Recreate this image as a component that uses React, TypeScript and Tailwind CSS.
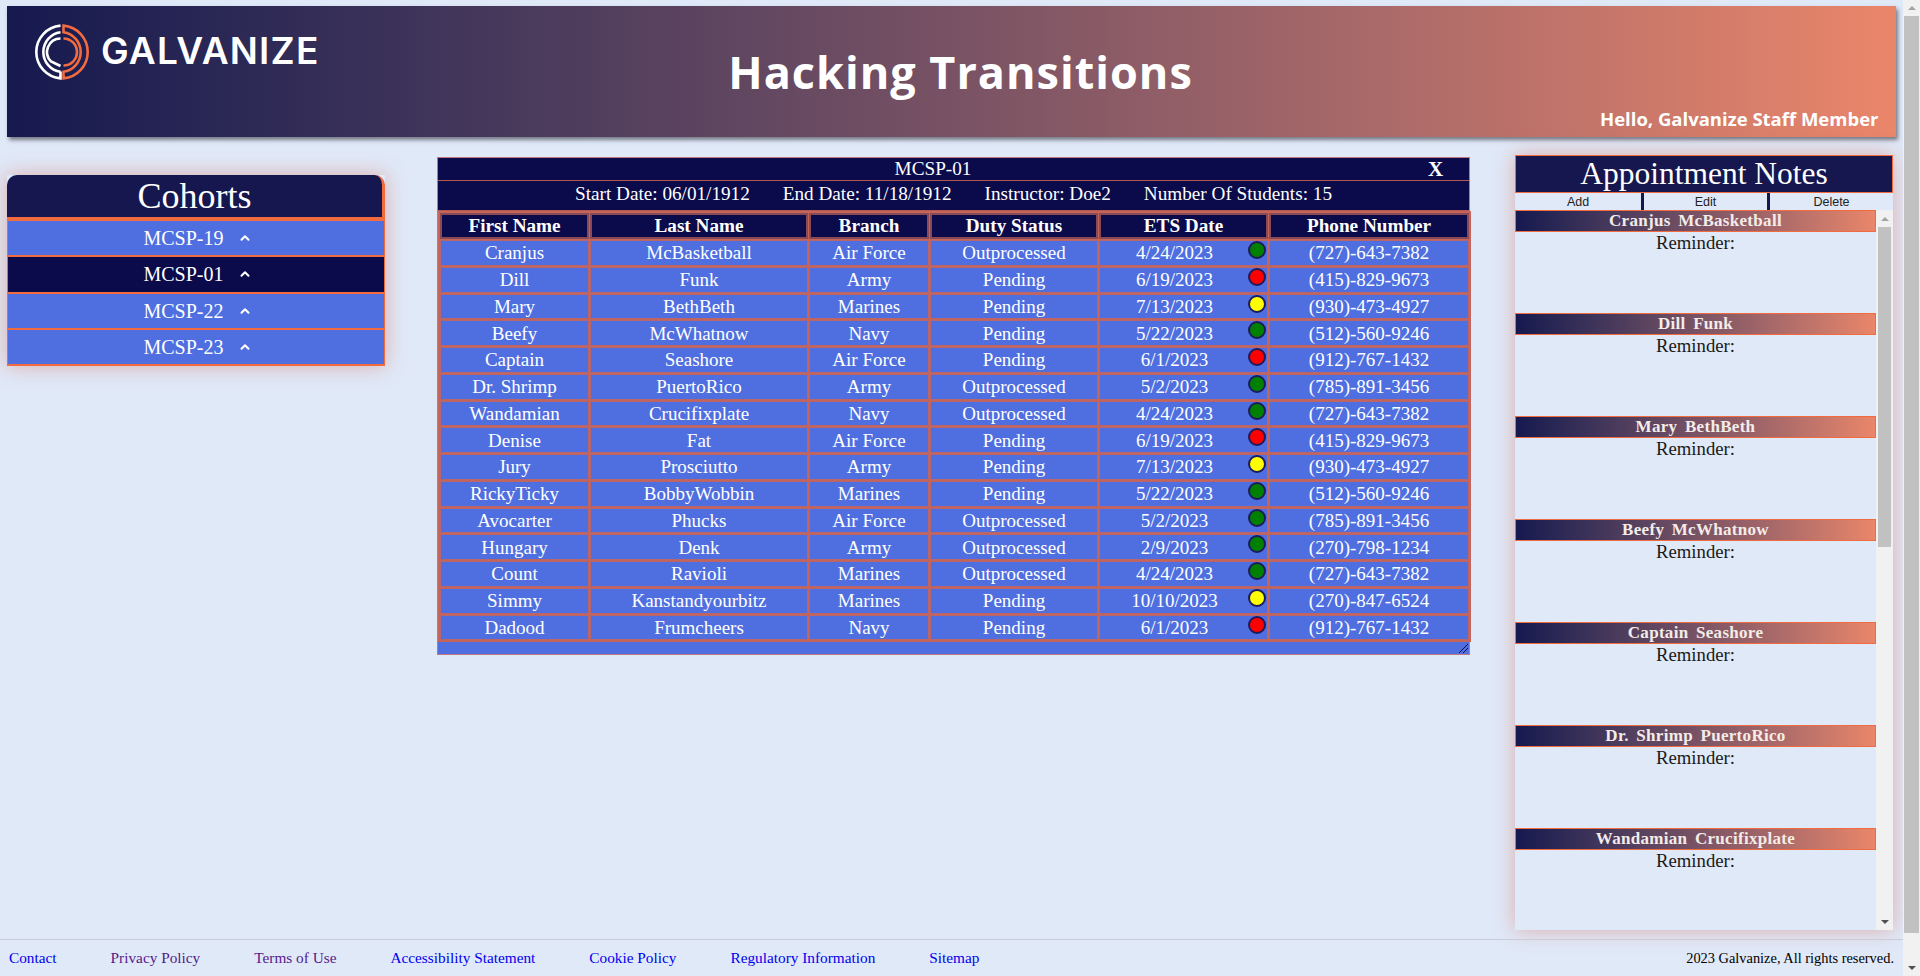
import { ChevronUp } from 'lucide-react';

type Student = { first: string; last: string; branch: string; duty: string; ets: string; status: 'green' | 'red' | 'yellow'; phone: string };

const students: Student[] = [
  { first: 'Cranjus', last: 'McBasketball', branch: 'Air Force', duty: 'Outprocessed', ets: '4/24/2023', status: 'green', phone: '(727)-643-7382' },
  { first: 'Dill', last: 'Funk', branch: 'Army', duty: 'Pending', ets: '6/19/2023', status: 'red', phone: '(415)-829-9673' },
  { first: 'Mary', last: 'BethBeth', branch: 'Marines', duty: 'Pending', ets: '7/13/2023', status: 'yellow', phone: '(930)-473-4927' },
  { first: 'Beefy', last: 'McWhatnow', branch: 'Navy', duty: 'Pending', ets: '5/22/2023', status: 'green', phone: '(512)-560-9246' },
  { first: 'Captain', last: 'Seashore', branch: 'Air Force', duty: 'Pending', ets: '6/1/2023', status: 'red', phone: '(912)-767-1432' },
  { first: 'Dr. Shrimp', last: 'PuertoRico', branch: 'Army', duty: 'Outprocessed', ets: '5/2/2023', status: 'green', phone: '(785)-891-3456' },
  { first: 'Wandamian', last: 'Crucifixplate', branch: 'Navy', duty: 'Outprocessed', ets: '4/24/2023', status: 'green', phone: '(727)-643-7382' },
  { first: 'Denise', last: 'Fat', branch: 'Air Force', duty: 'Pending', ets: '6/19/2023', status: 'red', phone: '(415)-829-9673' },
  { first: 'Jury', last: 'Prosciutto', branch: 'Army', duty: 'Pending', ets: '7/13/2023', status: 'yellow', phone: '(930)-473-4927' },
  { first: 'RickyTicky', last: 'BobbyWobbin', branch: 'Marines', duty: 'Pending', ets: '5/22/2023', status: 'green', phone: '(512)-560-9246' },
  { first: 'Avocarter', last: 'Phucks', branch: 'Air Force', duty: 'Outprocessed', ets: '5/2/2023', status: 'green', phone: '(785)-891-3456' },
  { first: 'Hungary', last: 'Denk', branch: 'Army', duty: 'Outprocessed', ets: '2/9/2023', status: 'green', phone: '(270)-798-1234' },
  { first: 'Count', last: 'Ravioli', branch: 'Marines', duty: 'Outprocessed', ets: '4/24/2023', status: 'green', phone: '(727)-643-7382' },
  { first: 'Simmy', last: 'Kanstandyourbitz', branch: 'Marines', duty: 'Pending', ets: '10/10/2023', status: 'yellow', phone: '(270)-847-6524' },
  { first: 'Dadood', last: 'Frumcheers', branch: 'Navy', duty: 'Pending', ets: '6/1/2023', status: 'red', phone: '(912)-767-1432' },
];

const statusClass = { green: 'bg-[#008000]', red: 'bg-[#ff0000]', yellow: 'bg-[#ffff00]' };
const cohorts = ['MCSP-19', 'MCSP-01', 'MCSP-22', 'MCSP-23'];
const notes = students.slice(0, 7);
const columns = ['First Name', 'Last Name', 'Branch', 'Duty Status', 'ETS Date', 'Phone Number'];
const widths = ['w-[149px]', 'w-[218px]', 'w-[120px]', 'w-[168px]', 'w-[169px]', 'w-[200px]'];
const footerLinks = [
  { label: 'Contact', cls: 'text-[#0000ee]' },
  { label: 'Privacy Policy', cls: 'text-[#551a8b]' },
  { label: 'Terms of Use', cls: 'text-[#551a8b]' },
  { label: 'Accessibility Statement', cls: 'text-[#0000ee]' },
  { label: 'Cookie Policy', cls: 'text-[#0000ee]' },
  { label: 'Regulatory Information', cls: 'text-[#0000ee]' },
  { label: 'Sitemap', cls: 'text-[#0000ee]' },
];

function Logo() {
  return (
    <svg width="56" height="56" viewBox="0 0 56 56" fill="none" strokeWidth="2.6" className="shrink-0">
      <g stroke="#ffffff">
        <path d="M26.5 1.6 A26.5 26.5 0 0 0 26.5 54.4 V47.5" />
        <path d="M26.5 8.2 A20 20 0 0 0 26.5 47.8" />
        <path d="M26.5 14.5 A13.5 13.5 0 0 0 17 37.5 L26.5 42" />
      </g>
      <g stroke="#f26b3f">
        <path d="M29.5 1.6 A26.5 26.5 0 0 1 29.5 54.4 V47.8 A20 20 0 0 0 29.5 8.2 Z" />
        <path d="M29.5 14.5 A13.5 13.5 0 0 1 29.5 41.5" />
      </g>
    </svg>
  );
}

function PageScrollbar() {
  return (
    <div className="flex h-[976px] w-[17px] shrink-0 flex-col items-center bg-[#f1f1f1]">
      <div className="flex h-[16px] items-center justify-center">
        <div className="h-0 w-0 border-x-[4px] border-b-[4px] border-x-transparent border-b-[#a3a3a3]" />
      </div>
      <div className="h-[917px] w-[15px] bg-[#c1c1c1]" />
      <div className="flex h-[43px] items-end justify-center pb-[6px]">
        <div className="h-0 w-0 border-x-[4px] border-t-[4px] border-x-transparent border-t-[#505050]" />
      </div>
    </div>
  );
}

export default function App() {
  return (
    <div className="flex h-[976px] w-[1920px] overflow-hidden bg-[#e0e9f8] font-['Liberation_Serif',serif]">
      <div className="flex min-w-0 flex-1 flex-col">
        {/* Header */}
        <header className="mx-[7px] mt-[6px] grid h-[131px] shrink-0 grid-cols-[314px_1fr_296px] items-center bg-gradient-to-r from-[#16194f] to-[#ea866a] shadow-[2px_3px_4px_rgba(60,60,70,0.65)]">
          <div className="flex items-center gap-[11px] self-start pl-[27px] pt-[18px]">
            <Logo />
            <span className="-mt-[3px] font-['Inter',sans-serif] text-[37px] font-semibold leading-none tracking-[1.2px] text-white">GALVANIZE</span>
          </div>
          <h1 className="text-center font-['Open_Sans',sans-serif] text-[45px] font-bold tracking-[1px] text-white">Hacking Transitions</h1>
          <div className="self-end whitespace-nowrap pb-[4px] pr-[18px] text-right font-['Open_Sans',sans-serif] text-[18.5px] font-bold text-white">Hello, Galvanize Staff Member</div>
        </header>

        <div className="flex min-h-0 flex-1">
          {/* Cohorts */}
          <aside className="ml-[7px] mt-[38px] w-[378px] shrink-0 self-start shadow-[0_0_20px_rgba(215,100,80,0.45)]">
            <div className="h-[46px] rounded-t-[10px] border-b-[4px] border-r-[3px] border-[#f26b3f] bg-[#16174f] text-center text-[36px] leading-[42px] text-white">Cohorts</div>
            {cohorts.map((c) => (
              <div
                key={c}
                className={`flex h-[36.25px] items-center justify-center gap-[14px] border-x border-b-2 border-[#f26b3f] pl-[3px] text-[20px] text-white ${c === 'MCSP-01' ? 'bg-[#0b0b4b]' : 'bg-[#4f6fe0]'}`}
              >
                <span>{c}</span>
                <ChevronUp size={14} strokeWidth={3.5} />
              </div>
            ))}
          </aside>

          {/* Cohort table */}
          <section className="ml-[52px] mt-[20px] h-[498px] w-[1033px] shrink-0 self-start border border-[#c0787c] bg-[#4f6fe0] text-white">
            <div className="flex h-[23px] border-b border-[#b5584f] bg-[#0b0b4b] text-[19.2px] leading-[22px]">
              <div className="flex-1 text-center">MCSP-01</div>
              <div className="w-[41px] pr-[30px] text-right text-[21px] font-bold">X</div>
            </div>
            <div className="flex h-[30px] items-center justify-center gap-[33px] border-b border-[#b5584f] bg-[#0b0b4b] pb-[2px] text-[19.2px]">
              <span>Start Date: 06/01/1912</span>
              <span>End Date: 11/18/1912</span>
              <span>Instructor: Doe2</span>
              <span>Number Of Students: 15</span>
            </div>
            <table className="w-full table-fixed border-separate border-spacing-[1px] border-[1px] border-[#c5655a] bg-[#c5655a] text-center text-[19px]">
              <thead>
                <tr>
                  {columns.map((c, i) => (
                    <th key={c} className={`h-[26px] border-2 border-[#8a4a55] bg-[#0b0b4b] p-0 text-[19.2px] font-bold leading-none ${widths[i]}`}>{c}</th>
                  ))}
                </tr>
              </thead>
              <tbody>
                {students.map((s) => (
                  <tr key={s.first}>
                    <td className="h-[25.75px] border border-[#b8666a] bg-[#4f6fe0] p-0 leading-none">{s.first}</td>
                    <td className="border border-[#b8666a] bg-[#4f6fe0] p-0 leading-none">{s.last}</td>
                    <td className="border border-[#b8666a] bg-[#4f6fe0] p-0 leading-none">{s.branch}</td>
                    <td className="border border-[#b8666a] bg-[#4f6fe0] p-0 leading-none">{s.duty}</td>
                    <td className="relative border border-[#b8666a] bg-[#4f6fe0] p-0 pr-[18px] leading-none">
                      {s.ets}
                      <span className={`absolute right-[1px] top-0 h-[18px] w-[18px] rounded-full border-2 border-[#1b1b5e] ${statusClass[s.status]}`} />
                    </td>
                    <td className="border border-[#b8666a] bg-[#4f6fe0] p-0 leading-none">{s.phone}</td>
                  </tr>
                ))}
              </tbody>
            </table>
            <div className="flex justify-end pr-[1px] pt-[2px]">
              <svg width="9" height="9" viewBox="0 0 9 9" stroke="#0b0b4b" strokeWidth="1">
                <path d="M0 9 L9 0 M4 9 L9 4" />
              </svg>
            </div>
          </section>

          {/* Appointment notes */}
          <aside className="ml-[45px] mt-[18px] flex h-[775px] w-[378px] shrink-0 flex-col self-start shadow-[0_0_20px_rgba(215,100,80,0.45)]">
            <div className="h-[38px] border border-[#f26b3f] bg-[#16174f] text-center text-[31.5px] leading-[36px] text-white">Appointment Notes</div>
            <div className="flex h-[17px] items-stretch font-['Liberation_Sans',sans-serif] text-[12.5px] leading-[18px] text-[#222222]">
              <div className="w-[126px] text-center">Add</div>
              <div className="w-[3px] bg-[#16174f]" />
              <div className="w-[123px] text-center">Edit</div>
              <div className="w-[3px] bg-[#16174f]" />
              <div className="flex-1 text-center">Delete</div>
            </div>
            <div className="flex min-h-0 flex-1">
              <div className="min-w-0 flex-1 overflow-hidden">
                {notes.map((n) => (
                  <div key={n.first} className="h-[103px] text-center">
                    <div className="h-[22px] border border-[#f26b3f] bg-gradient-to-r from-[#16194f] to-[#ea866a] text-[17px] font-bold leading-[20px] tracking-[0.3px] text-[#f3ece8] [word-spacing:3px]">
                      {n.first} {n.last}
                    </div>
                    <div className="text-[18.72px] leading-[21px] text-[#1a1a1a]">Reminder:</div>
                  </div>
                ))}
              </div>
              <div className="flex w-[17px] shrink-0 flex-col items-center bg-[#f1f1f1]">
                <div className="flex h-[17px] items-center justify-center">
                  <div className="h-0 w-0 border-x-[4px] border-b-[4px] border-x-transparent border-b-[#a3a3a3]" />
                </div>
                <div className="h-[320px] w-[13px] bg-[#c1c1c1]" />
                <div className="flex flex-1 items-end justify-center pb-[6px]">
                  <div className="h-0 w-0 border-x-[4px] border-t-[4px] border-x-transparent border-t-[#505050]" />
                </div>
              </div>
            </div>
          </aside>
        </div>

        {/* Footer */}
        <footer className="flex h-[37px] shrink-0 items-center justify-between border-t border-[#c9ced6] pl-[9px] pr-[9px] pt-[1px] text-[14.4px]">
          <div className="flex gap-[54px] text-[15.3px]">
            {footerLinks.map((l) => (
              <a key={l.label} href="#" className={l.cls}>{l.label}</a>
            ))}
          </div>
          <span className="text-black">2023 Galvanize, All rights reserved.</span>
        </footer>
      </div>
      <PageScrollbar />
    </div>
  );
}
